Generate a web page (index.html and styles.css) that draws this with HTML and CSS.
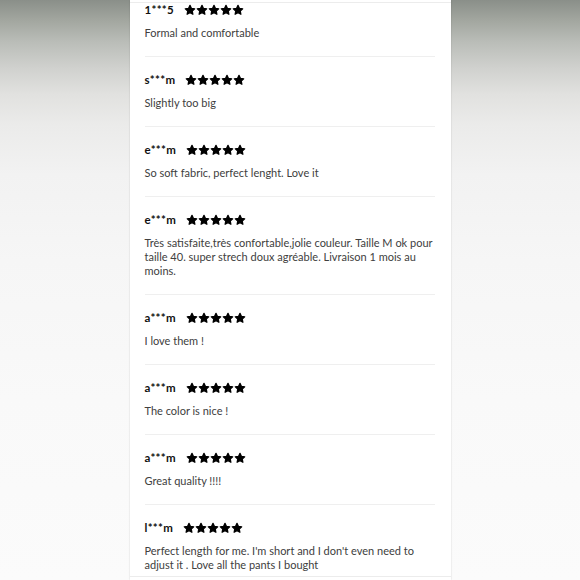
FILE: index.html
```html
<!DOCTYPE html>
<html lang="en">
<head>
<meta charset="utf-8">
<title>Reviews</title>
<link rel="stylesheet" href="styles.css">
</head>
<body>
<svg width="0" height="0" class="defs" aria-hidden="true">
  <defs>
    <symbol id="star" viewBox="0 0 24 24">
      <path d="M12 2.6l2.85 6.05 6.6.82-4.86 4.55 1.25 6.55L12 17.35l-5.84 3.22 1.25-6.55L2.55 9.47l6.6-.82z" fill="#000" stroke="#000" stroke-width="2.4" stroke-linejoin="round"/>
    </symbol>
  </defs>
</svg>
<div class="panel">
  <div class="topbar"></div>
  <ul class="reviews">
    <li class="review first">
      <div class="head"><span class="name">1***5</span><span class="stars"><svg><use href="#star"/></svg><svg><use href="#star"/></svg><svg><use href="#star"/></svg><svg><use href="#star"/></svg><svg><use href="#star"/></svg></span></div>
      <p class="text">Formal and comfortable</p>
    </li>
    <li class="review">
      <div class="head"><span class="name">s***m</span><span class="stars"><svg><use href="#star"/></svg><svg><use href="#star"/></svg><svg><use href="#star"/></svg><svg><use href="#star"/></svg><svg><use href="#star"/></svg></span></div>
      <p class="text">Slightly too big</p>
    </li>
    <li class="review">
      <div class="head"><span class="name">e***m</span><span class="stars"><svg><use href="#star"/></svg><svg><use href="#star"/></svg><svg><use href="#star"/></svg><svg><use href="#star"/></svg><svg><use href="#star"/></svg></span></div>
      <p class="text">So soft fabric, perfect lenght. Love it</p>
    </li>
    <li class="review">
      <div class="head"><span class="name">e***m</span><span class="stars"><svg><use href="#star"/></svg><svg><use href="#star"/></svg><svg><use href="#star"/></svg><svg><use href="#star"/></svg><svg><use href="#star"/></svg></span></div>
      <p class="text">Très satisfaite,très confortable,jolie couleur. Taille M ok pour taille 40. super strech doux agréable. Livraison 1 mois au moins.</p>
    </li>
    <li class="review">
      <div class="head"><span class="name">a***m</span><span class="stars"><svg><use href="#star"/></svg><svg><use href="#star"/></svg><svg><use href="#star"/></svg><svg><use href="#star"/></svg><svg><use href="#star"/></svg></span></div>
      <p class="text">I love them !</p>
    </li>
    <li class="review">
      <div class="head"><span class="name">a***m</span><span class="stars"><svg><use href="#star"/></svg><svg><use href="#star"/></svg><svg><use href="#star"/></svg><svg><use href="#star"/></svg><svg><use href="#star"/></svg></span></div>
      <p class="text">The color is nice !</p>
    </li>
    <li class="review">
      <div class="head"><span class="name">a***m</span><span class="stars"><svg><use href="#star"/></svg><svg><use href="#star"/></svg><svg><use href="#star"/></svg><svg><use href="#star"/></svg><svg><use href="#star"/></svg></span></div>
      <p class="text">Great quality !!!!</p>
    </li>
    <li class="review">
      <div class="head"><span class="name">l***m</span><span class="stars"><svg><use href="#star"/></svg><svg><use href="#star"/></svg><svg><use href="#star"/></svg><svg><use href="#star"/></svg><svg><use href="#star"/></svg></span></div>
      <p class="text">Perfect length for me. I'm short and I don't even need to adjust it . Love all the pants I bought</p>
    </li>
  </ul>
  <div class="bottombar"></div>
</div>
</body>
</html>
```

FILE: styles.css
```css
html, body {
  margin: 0;
  padding: 0;
}
body {
  width: 580px;
  height: 580px;
  overflow: hidden;
  background: linear-gradient(to bottom,
    #8a8f89 0px,
    #a2a69f 20px,
    #babdb8 42px,
    #d0d1ce 68px,
    #e1e1df 94px,
    #ebebea 125px,
    #f2f2f2 175px,
    #f6f6f6 260px,
    #f9f9f9 400px,
    #fbfbfb 580px);
  font-family: Lato, "Noto Sans", sans-serif;
}
.defs {
  position: absolute;
}
.panel {
  position: relative;
  width: 321px;
  height: 580px;
  margin: 0 auto;
  background: #fff;
  box-shadow: 0 0 1.5px rgba(0, 0, 0, 0.18);
  overflow: hidden;
}
.topbar {
  height: 2px;
  border-bottom: 1px solid #ececec;
}
.reviews {
  list-style: none;
  margin: 0;
  padding: 0 16px 0 15px;
}
.review {
  padding: 16px 0 16px;
  border-bottom: 1px solid #efefef;
}
.review.first {
  padding-top: 0;
}
.head {
  display: flex;
  align-items: center;
  gap: 10px;
  height: 14px;
}
.name {
  font-size: 11.5px;
  font-weight: 700;
  letter-spacing: 0.3px;
  color: #111;
  line-height: 14px;
}
.stars {
  display: flex;
}
.stars svg {
  width: 12px;
  height: 12px;
  display: block;
}
.text {
  margin: 9px 0 0;
  font-size: 11px;
  line-height: 14px;
  color: #404040;
}
.bottombar {
  position: absolute;
  left: 0;
  right: 0;
  top: 576px;
  bottom: 0;
  background: #fff;
  border-top: 1px solid #ececec;
}
```
